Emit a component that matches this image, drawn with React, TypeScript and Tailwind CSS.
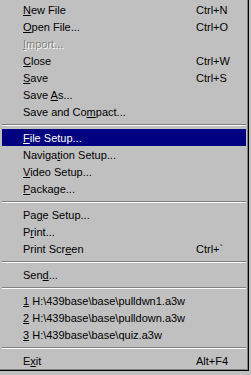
import React from "react";

type Item =
  | { sep: true }
  | {
      sep?: false;
      pre?: string;
      u?: string;
      post?: string;
      sc?: string;
      disabled?: boolean;
      active?: boolean;
    };

const items: Item[] = [
  { u: "N", post: "ew File", sc: "Ctrl+N" },
  { u: "O", post: "pen File...", sc: "Ctrl+O" },
  { u: "I", post: "mport...", disabled: true },
  { u: "C", post: "lose", sc: "Ctrl+W" },
  { u: "S", post: "ave", sc: "Ctrl+S" },
  { pre: "Save ", u: "A", post: "s..." },
  { pre: "Save and Co", u: "m", post: "pact..." },
  { sep: true },
  { u: "F", post: "ile Setup...", active: true },
  { pre: "Naviga", u: "t", post: "ion Setup..." },
  { u: "V", post: "ideo Setup..." },
  { u: "P", post: "ackage..." },
  { sep: true },
  { pre: "Pa", u: "g", post: "e Setup..." },
  { pre: "P", u: "r", post: "int..." },
  { pre: "Print Scr", u: "e", post: "en", sc: "Ctrl+`" },
  { sep: true },
  { pre: "Sen", u: "d", post: "..." },
  { sep: true },
  { u: "1", post: " H:\\439base\\base\\pulldwn1.a3w" },
  { u: "2", post: " H:\\439base\\base\\pulldown.a3w" },
  { u: "3", post: " H:\\439base\\base\\quiz.a3w" },
  { sep: true },
  { pre: "E", u: "x", post: "it", sc: "Alt+F4" },
];

export default function App() {
  return (
    <div
      className="w-[251px] h-[375px] bg-[#c0c0c0] overflow-hidden text-[11px]"
      style={{ fontFamily: '"Liberation Sans", Arial, sans-serif' }}
    >
      <div className="w-[249px] border-r border-b border-black">
        <div className="border-r border-b border-[#808080] pl-[2px] pr-[1px] pt-[1px]">
          {items.map((it, i) => {
            if (it.sep) {
              return (
                <div key={i} className="h-[9px] pt-[4px]">
                  <div className="h-[2px] border-t border-b border-t-[#808080] border-b-white" />
                </div>
              );
            }
            const color = it.active
              ? "bg-[#000080] text-white"
              : it.disabled
              ? "text-[#808080] [text-shadow:1px_1px_0_#ffffff]"
              : "text-black";
            return (
              <div
                key={i}
                className={`h-[17px] flex items-start leading-[19px] overflow-visible ${color}`}
              >
                <div className="w-[194px] pl-[21px] whitespace-pre">
                  {it.pre}
                  <span className="underline underline-offset-1">{it.u}</span>
                  {it.post}
                </div>
                {it.sc && <div className="whitespace-pre">{it.sc}</div>}
              </div>
            );
          })}
        </div>
      </div>
    </div>
  );
}
